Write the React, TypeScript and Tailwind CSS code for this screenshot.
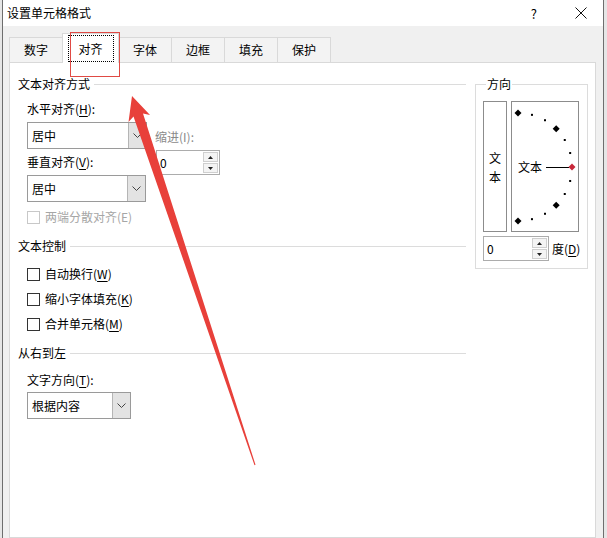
import React from 'react';

const cjk = "font-['Microsoft_YaHei','Noto_Sans_CJK_SC',sans-serif]";

function Chevron() {
	return (
		<svg width="9" height="5" viewBox="0 0 9 5" fill="none">
			<path d="M0.5 0.5 L4.5 4.5 L8.5 0.5" stroke="#444" strokeWidth="1" />
		</svg>
	);
}

function Select({ value, width }: { value: string; width: string }) {
	return (
		<div className={`flex h-[27px] border border-[#9a9a9a] bg-white ${width}`}>
			<div className="flex-1 flex items-center pl-[4px] leading-none">{value}</div>
			<div className="w-[18px] flex items-center justify-center bg-[#e3e3e3] border-l border-[#b5b5b5]">
				<Chevron />
			</div>
		</div>
	);
}

function Spinner({ width }: { width: string }) {
	return (
		<div className={`flex h-[25px] border border-[#acacac] bg-white ${width}`}>
			<div className="flex-1 flex items-center pl-[3px] leading-none">0</div>
			<div className="flex flex-col justify-center gap-[1px] pr-[1px]">
				<div className="w-[15px] h-[10px] border border-[#cfcfcf] bg-[#f4f4f4] flex items-center justify-center">
					<svg width="5" height="3" viewBox="0 0 5 3"><path d="M0 3 L2.5 0 L5 3 Z" fill="#222" /></svg>
				</div>
				<div className="w-[15px] h-[10px] border border-[#cfcfcf] bg-[#f4f4f4] flex items-center justify-center">
					<svg width="5" height="3" viewBox="0 0 5 3"><path d="M0 0 L2.5 3 L5 0 Z" fill="#222" /></svg>
				</div>
			</div>
		</div>
	);
}

function Header({ text }: { text: string }) {
	return (
		<div className="flex items-center h-[16px]">
			<span className="leading-[16px]">{text}</span>
			<div className="flex-1 h-px bg-[#dcdcdc] ml-[4px]" />
		</div>
	);
}

function Check({ label, acc, disabled }: { label: string; acc?: string; disabled?: boolean }) {
	return (
		<div className={`flex items-center h-[16px] ${disabled ? 'text-[#a6a6a6]' : ''}`}>
			<div className={`w-[13px] h-[13px] border bg-white ${disabled ? 'border-[#c8c8c8]' : 'border-[#333]'}`} />
			<span className="ml-[5px] leading-[16px]">
				{label}
				{acc ? (
					<>
						(<span className="underline underline-offset-2">{acc}</span>)
					</>
				) : null}
			</span>
		</div>
	);
}

function Dial() {
	const pts: { x: number; y: number; big: boolean; red: boolean }[] = [];
	for (let a = -90; a <= 90; a += 15) {
		const r = (a * Math.PI) / 180;
		pts.push({ x: 6 + 54 * Math.cos(r), y: 65 + 54 * Math.sin(r), big: a % 45 === 0, red: a === 0 });
	}
	return (
		<div className="relative w-[68px] h-[131px] border border-[#8c8c8c] bg-white">
			<svg className="absolute inset-0" width="66" height="129" viewBox="0 0 66 129">
				<line x1="34" y1="65.5" x2="57" y2="65.5" stroke="#000" strokeWidth="1" />
				{pts.map((p, i) =>
					p.big ? (
						<path
							key={i}
							d={`M${p.x} ${p.y - 3.5} L${p.x + 3.5} ${p.y} L${p.x} ${p.y + 3.5} L${p.x - 3.5} ${p.y} Z`}
							fill={p.red ? '#c8283a' : '#000'}
						/>
					) : (
						<rect key={i} x={p.x - 1} y={p.y - 1} width="2" height="2" fill="#000" />
					)
				)}
			</svg>
			<span className="absolute left-[6px] top-[57px] leading-[16px]">文本</span>
		</div>
	);
}

export default function App() {
	return (
		<div className={`relative w-[607px] h-[538px] overflow-hidden bg-[#e6e6e6] text-[12px] text-black ${cjk}`}>
			<div className="ml-[2px] w-[602px] h-full border-x border-[#6e6e6e] bg-[#f0f0f0] flex flex-col">
				{/* title bar */}
				<div className="h-[26px] bg-white flex items-center pl-[4px] shrink-0">
					<span className="text-[12px] leading-none">设置单元格格式</span>
					<div className="flex-1" />
					<span className="text-[13px] leading-none mr-[38px]">?</span>
					<svg width="12" height="12" viewBox="0 0 12 12" className="mr-[16px]">
						<path d="M0.5 0.5 L11.5 11.5 M11.5 0.5 L0.5 11.5" stroke="#111" strokeWidth="1" />
					</svg>
				</div>

				{/* tabs */}
				<div className="h-[36px] flex items-end pl-[6px] shrink-0">
					<div className="w-[54px] h-[25px] border border-b-0 border-[#d9d9d9] bg-[#f3f3f3] flex items-center justify-center">数字</div>
					<div className="relative z-10 -ml-px -mb-px w-[57px] h-[30px] border border-b-0 border-[#d9d9d9] bg-white flex items-start justify-center pt-[1px]">
						<div className="w-[46px] h-[27px] border border-dotted border-black flex items-center justify-center">对齐</div>
					</div>
					{['字体', '边框', '填充', '保护'].map((t) => (
						<div key={t} className="-ml-px w-[54px] h-[25px] border border-b-0 border-[#d9d9d9] bg-[#f3f3f3] flex items-center justify-center">
							{t}
						</div>
					))}
				</div>

				{/* panel */}
				<div className="ml-[6px] w-[587px] flex-1 border border-[#d9d9d9] bg-white flex pl-[8px] pt-[13px]">
					<div className="w-[448px] flex flex-col">
						<Header text="文本对齐方式" />
						<div className="pl-[9px] mt-[9px] flex">
							<div className="flex flex-col">
								<div className="h-[16px] leading-[16px]">
									水平对齐(<span className="underline underline-offset-2">H</span>):
								</div>
								<div className="mt-[5px]">
									<Select value="居中" width="w-[120px]" />
								</div>
								<div className="mt-[5px] h-[16px] leading-[16px]">
									垂直对齐(<span className="underline underline-offset-2">V</span>):
								</div>
								<div className="mt-[5px]">
									<Select value="居中" width="w-[119px]" />
								</div>
							</div>
							<div className="ml-[8px] flex flex-col">
								<div className="mt-[28px] h-[16px] leading-[16px] text-[#8a8a8a]">缩进(I):</div>
								<div className="mt-[5px] ml-[1px]">
									<Spinner width="w-[64px]" />
								</div>
							</div>
						</div>
						<div className="pl-[9px] mt-[7px]">
							<Check label="两端分散对齐(E)" disabled />
						</div>
						<div className="mt-[13px]">
							<Header text="文本控制" />
						</div>
						<div className="pl-[9px] mt-[12px] flex flex-col gap-[9px]">
							<Check label="自动换行" acc="W" />
							<Check label="缩小字体填充" acc="K" />
							<Check label="合并单元格" acc="M" />
						</div>
						<div className="mt-[13px]">
							<Header text="从右到左" />
						</div>
						<div className="pl-[9px] mt-[11px] h-[16px] leading-[16px]">
							文字方向(<span className="underline underline-offset-2">T</span>):
						</div>
						<div className="pl-[9px] mt-[4px]">
							<Select value="根据内容" width="w-[104px]" />
						</div>
					</div>

					<fieldset className="ml-[9px] w-[113px] self-start border border-[#dcdcdc] pl-[7px] pb-[7px]">
						<legend className="ml-[3px] px-[1px] leading-[16px]">方向</legend>
						<div className="mt-[9px] flex gap-[4px]">
							<div className="w-[24px] h-[131px] border border-[#8c8c8c] flex flex-col items-center justify-center leading-[19px]">
								<span>文</span>
								<span>本</span>
							</div>
							<Dial />
						</div>
						<div className="mt-[4px] flex items-center">
							<Spinner width="w-[66px]" />
							<span className="ml-[3px] leading-[16px]">
								度(<span className="underline underline-offset-2">D</span>)
							</span>
						</div>
					</fieldset>
				</div>
			</div>

			{/* annotations */}
			<div className="absolute left-[70px] top-[32px] w-[50px] h-[45px] border border-[#e04a44] pointer-events-none z-20" />
			<svg className="absolute inset-0 pointer-events-none z-20" width="607" height="538" viewBox="0 0 607 538">
				<polygon
					points="132,96 150,115 143,113.6 255.5,464.8 254.5,465.2 133.5,116.4 128.5,122"
					fill="#e8403a"
				/>
			</svg>
		</div>
	);
}
